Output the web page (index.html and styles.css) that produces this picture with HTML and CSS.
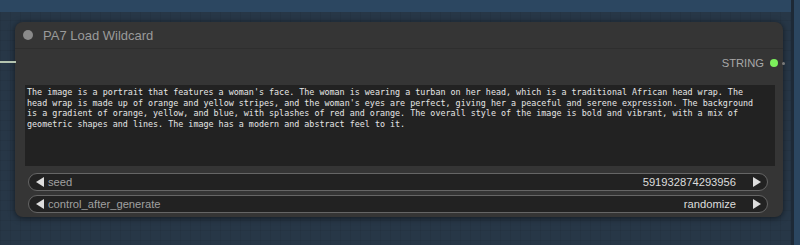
FILE: index.html
```html
<!DOCTYPE html>
<html lang="en">
<head>
  <meta charset="UTF-8" />
  <title>PA7 Load Wildcard</title>
  <link rel="stylesheet" href="styles.css">
</head>
<body>

<div class="canvas">
  <div class="wire"></div>
  <div class="edge"></div>

  <div class="node">
    <div class="node-title">
      <span class="title-dot"></span>
      <span class="title-text">PA7 Load Wildcard</span>
    </div>

    <div class="outputs">
      <span class="out-label">STRING</span>
      <span class="out-dot"></span>
      <span class="out-stub"></span>
    </div>

    <div class="prompt">
      <div>The image is a portrait that features a woman's face. The woman is wearing a turban on her head, which is a traditional African head wrap. The</div>
      <div>head wrap is made up of orange and yellow stripes, and the woman's eyes are perfect, giving her a peaceful and serene expression. The background</div>
      <div>is a gradient of orange, yellow, and blue, with splashes of red and orange. The overall style of the image is bold and vibrant, with a mix of</div>
      <div>geometric shapes and lines. The image has a modern and abstract feel to it.</div>
    </div>

    <div class="widgets">
      <div class="widget">
        <span class="arrow left"></span>
        <span class="w-label">seed</span>
        <span class="w-value">591932874293956</span>
        <span class="arrow right"></span>
      </div>
      <div class="widget">
        <span class="arrow left"></span>
        <span class="w-label">control_after_generate</span>
        <span class="w-value">randomize</span>
        <span class="arrow right"></span>
      </div>
    </div>
  </div>
</div>

</body>
</html>
```

FILE: styles.css
```css
* { box-sizing: border-box; }

body {
  margin: 0;
  font-family: 'Liberation Sans', Arial, sans-serif;
  background: #263545;
}

.canvas {
  position: relative;
  width: 800px;
  height: 245px;
  padding: 22px 0 0 15px;
  overflow: hidden;
  background:
    linear-gradient(to bottom, #2c4761 0, #2c4761 12px, transparent 12px),
    repeating-linear-gradient(to right, rgba(0,0,0,0.06) 0 1px, transparent 1px 10px),
    repeating-linear-gradient(to bottom, rgba(0,0,0,0.06) 0 1px, transparent 1px 10px),
    #273747;
}

/* link coming in from the left */
.wire {
  position: absolute;
  left: 0;
  top: 61px;
  width: 16px;
  height: 2px;
  background: #b4c4b0;
}

/* right side group border */
.edge {
  position: absolute;
  top: 0;
  left: 791px;
  width: 9px;
  height: 245px;
  border-left: 3px solid #1d2936;
  background: #2b4660;
}

.node {
  width: 768px;
  background: #353535;
  border-radius: 8px;
  box-shadow: 0 1px 6px rgba(0, 0, 0, 0.55);
}

.node-title {
  height: 27px;
  display: flex;
  align-items: center;
  padding-left: 8px;
  gap: 10px;
  border-bottom: 1px solid #2e2e2e;
}

.title-dot {
  width: 10px;
  height: 10px;
  border-radius: 50%;
  background: #8a8a8a;
}

.title-text {
  color: #9a9a9a;
  font-size: 13px;
}

.outputs {
  position: relative;
  height: 28px;
  display: flex;
  justify-content: flex-end;
  align-items: center;
  gap: 6px;
  padding-right: 5px;
}

.out-label {
  color: #a8a8a8;
  font-size: 11.2px;
}

.out-dot {
  width: 8px;
  height: 8px;
  border-radius: 50%;
  background: #7cf05c;
}

.out-stub {
  position: absolute;
  right: -2px;
  top: 13px;
  width: 3px;
  height: 3px;
  border-radius: 50%;
  background: #7a7a7a;
}

.prompt {
  margin: 8px 8px 0 10px;
  height: 81px;
  padding: 2px 2px;
  background: #222222;
  color: #e6e6e6;
  font-family: 'DejaVu Sans Mono', 'Liberation Mono', monospace;
  font-size: 8.38px;
  line-height: 10.5px;
  white-space: nowrap;
  overflow: hidden;
}

.widgets {
  display: flex;
  flex-direction: column;
  gap: 4px;
  margin: 7px 15px 0 13px;
  padding-bottom: 4px;
}

.widget {
  height: 18px;
  display: flex;
  align-items: center;
  padding: 0 6px 0 7px;
  background: #222222;
  border: 1px solid #666666;
  border-radius: 9px;
  font-size: 11.2px;
  line-height: 14px;
}

.w-label {
  color: #a0a0a0;
  margin-left: 4px;
  flex: 1;
}

.w-value {
  color: #dddddd;
  margin-right: 17px;
}

.arrow {
  width: 0;
  height: 0;
  border-top: 5px solid transparent;
  border-bottom: 5px solid transparent;
}

.arrow.left { border-right: 8px solid #dddddd; }
.arrow.right { border-left: 8px solid #dddddd; }
```
